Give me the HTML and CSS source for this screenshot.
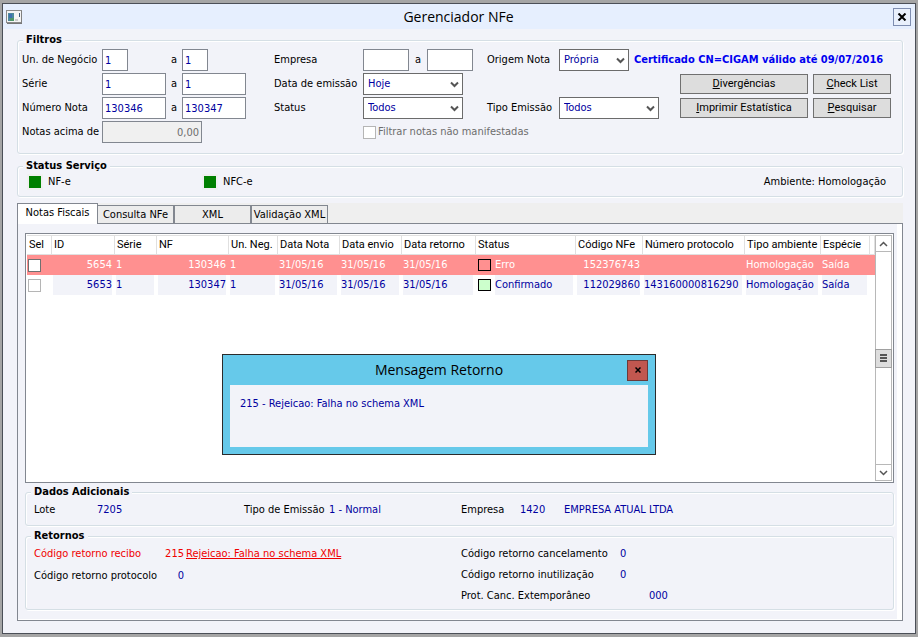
FILE: index.html
```html
<!DOCTYPE html>
<html lang="pt-BR">
<head>
  <meta charset="UTF-8">
  <meta name="viewport" content="width=device-width, initial-scale=1.0">
  <title>Gerenciador NFe</title>
  <link rel="stylesheet" href="styles.css">
</head>
<body>

  <div class="window">
    <header class="titlebar">
      <svg class="app-icon" width="16" height="14" viewBox="0 0 16 14">
        <rect x="0.5" y="0.5" width="15" height="12" fill="#f4f4f4" stroke="#8a8a8a"/>
        <path d="M1 13.5h15V1" fill="none" stroke="#777"/>
        <rect x="2" y="3" width="6" height="8" fill="#4d8a9c"/>
        <rect x="3" y="4" width="3" height="4" fill="#3e70b0"/>
        <rect x="4" y="8" width="4" height="3" fill="#4f9668"/>
        <rect x="9" y="9" width="3" height="2" fill="#ccc"/>
        <rect x="13" y="3" width="1" height="4" fill="#3c5a78"/>
      </svg>
      <h1>Gerenciador NFe</h1>
      <button class="close" aria-label="Fechar">
        <svg width="10" height="8" viewBox="0 0 10 8"><path d="M1.500 .5l7 7M8.500 .5l-7 7" stroke="#000" stroke-width="2"/></svg>
      </button>
    </header>

    <main>
      <fieldset class="filters">
        <legend>Filtros</legend>
        <div class="filter-cols">
          <div class="col-range">
            <label for="unIni">Un. de Negócio</label>
            <input id="unIni" class="short" type="text" value="1">
            <label for="unFim" class="to">a</label>
            <input id="unFim" class="short" type="text" value="1">

            <label for="serieIni">Série</label>
            <input id="serieIni" type="text" value="1">
            <label for="serieFim" class="to">a</label>
            <input id="serieFim" type="text" value="1">

            <label for="notaIni">Número Nota</label>
            <input id="notaIni" type="text" value="130346">
            <label for="notaFim" class="to">a</label>
            <input id="notaFim" type="text" value="130347">

            <label for="acima">Notas acima de</label>
            <input id="acima" class="amount" type="text" value="0,00" disabled>
          </div>

          <div class="col-company">
            <label for="empIni">Empresa</label>
            <input id="empIni" type="text">
            <label for="empFim" class="to">a</label>
            <input id="empFim" type="text">

            <label for="data">Data de emissão</label>
            <div class="select wide">
              <select id="data"><option>Hoje</option></select>
              <svg width="9" height="7" viewBox="0 0 9 7"><path d="M1 1.500l3.500 3.500L8 1.500" fill="none" stroke="#555" stroke-width="2"/></svg>
            </div>

            <label for="status">Status</label>
            <div class="select wide">
              <select id="status"><option>Todos</option></select>
              <svg width="9" height="7" viewBox="0 0 9 7"><path d="M1 1.500l3.500 3.500L8 1.500" fill="none" stroke="#555" stroke-width="2"/></svg>
            </div>

            <label class="check"><input type="checkbox" disabled>Filtrar notas não manifestadas</label>
          </div>

          <div class="col-origin">
            <div class="row">
              <label for="origem">Origem Nota</label>
              <div class="select narrow">
                <select id="origem"><option>Própria</option></select>
                <svg width="9" height="7" viewBox="0 0 9 7"><path d="M1 1.500l3.500 3.500L8 1.500" fill="none" stroke="#555" stroke-width="2"/></svg>
              </div>
              <strong class="cert">Certificado CN=CIGAM válido até 09/07/2016</strong>
            </div>
            <div class="row">
              <div class="actions">
                <button class="btn btn-wide"><u>D</u>ivergências</button>
                <button class="btn"><u>C</u>heck List</button>
              </div>
            </div>
            <div class="row">
              <label for="tipo">Tipo Emissão</label>
              <div class="select wide">
                <select id="tipo"><option>Todos</option></select>
                <svg width="9" height="7" viewBox="0 0 9 7"><path d="M1 1.500l3.500 3.500L8 1.500" fill="none" stroke="#555" stroke-width="2"/></svg>
              </div>
              <div class="actions">
                <button class="btn btn-wide"><u>I</u>mprimir Estatística</button>
                <button class="btn"><u>P</u>esquisar</button>
              </div>
            </div>
          </div>
        </div>
      </fieldset>

      <fieldset class="service">
        <legend>Status Serviço</legend>
        <div class="service-row">
          <span class="led-item"><i class="led"></i>NF-e</span>
          <span class="led-item"><i class="led"></i>NFC-e</span>
          <span class="env">Ambiente: Homologação</span>
        </div>
      </fieldset>

      <nav class="tabs">
        <button class="tab active">Notas Fiscais</button>
        <button class="tab">Consulta NFe</button>
        <button class="tab">XML</button>
        <button class="tab">Validação XML</button>
      </nav>

      <section class="panel">
        <div class="grid-box">
          <div class="table-area">
            <table>
              <colgroup>
                <col class="w-sel"><col class="w-id"><col class="w-serie"><col class="w-nf"><col class="w-un">
                <col class="w-date"><col class="w-date"><col class="w-ret"><col class="w-status"><col class="w-cod">
                <col class="w-prot"><col class="w-amb"><col class="w-esp"><col>
              </colgroup>
              <thead>
                <tr>
                  <th>Sel</th><th>ID</th><th>Série</th><th>NF</th><th>Un. Neg.</th><th>Data Nota</th><th>Data envio</th>
                  <th>Data retorno</th><th>Status</th><th>Código NFe</th><th>Número protocolo</th><th>Tipo ambiente</th><th>Espécie</th><th></th>
                </tr>
              </thead>
              <tbody>
                <tr class="error">
                  <td class="sel"><input type="checkbox" aria-label="Selecionar 5654"></td>
                  <td class="num">5654</td><td>1</td><td class="num">130346</td><td>1</td>
                  <td>31/05/16</td><td>31/05/16</td><td>31/05/16</td>
                  <td class="state"><div><i class="swatch"></i><span>Erro</span></div></td>
                  <td class="num">152376743</td><td></td><td>Homologação</td><td>Saída</td><td class="rest"></td>
                </tr>
                <tr>
                  <td class="sel"><input type="checkbox" aria-label="Selecionar 5653"></td>
                  <td class="num">5653</td><td>1</td><td class="num">130347</td><td>1</td>
                  <td>31/05/16</td><td>31/05/16</td><td>31/05/16</td>
                  <td class="state"><div><i class="swatch ok"></i><span>Confirmado</span></div></td>
                  <td class="num">112029860</td><td>143160000816290</td><td>Homologação</td><td>Saída</td><td class="rest"></td>
                </tr>
              </tbody>
            </table>
          </div>

          <div class="scrollbar">
            <button aria-label="Subir"><svg width="9" height="6" viewBox="0 0 9 6"><path d="M1 5l3.500-3.500L8 5" fill="none" stroke="#555" stroke-width="1.500"/></svg></button>
            <div class="thumb"><svg width="7" height="8" viewBox="0 0 7 8"><path d="M0 1h7M0 4h7M0 7h7" stroke="#555" stroke-width="2"/></svg></div>
            <button aria-label="Descer"><svg width="9" height="6" viewBox="0 0 9 6"><path d="M1 1l3.500 3.500L8 1" fill="none" stroke="#555" stroke-width="1.500"/></svg></button>
          </div>

          <div class="dialog" role="dialog" aria-labelledby="dialogTitle">
            <div class="dialog-head">
              <h2 id="dialogTitle">Mensagem Retorno</h2>
              <button class="dialog-close" aria-label="Fechar mensagem">
                <svg width="6" height="6" viewBox="0 0 6 6"><path d="M.5 .5l5 5M5.500 .5l-5 5" stroke="#000" stroke-width="1.500"/></svg>
              </button>
            </div>
            <p>215 - Rejeicao: Falha no schema XML</p>
          </div>
        </div>

        <fieldset class="extra">
          <legend>Dados Adicionais</legend>
          <div class="halves">
            <div class="info-left">
              <span>Lote</span><span class="value">7205</span>
              <span>Tipo de Emissão</span><span class="value">1 - Normal</span>
            </div>
            <div class="info-right">
              <span>Empresa</span><span class="value">1420</span><span class="value">EMPRESA ATUAL LTDA</span>
            </div>
          </div>
        </fieldset>

        <fieldset class="returns">
          <legend>Retornos</legend>
          <div class="halves">
            <div class="ret-left">
              <span class="alert">Código retorno recibo</span><span class="code alert">215</span><a href="#" class="alert">Rejeicao: Falha no schema XML</a>
              <span>Código retorno protocolo</span><span class="code value">0</span>
            </div>
            <div class="ret-right">
              <span>Código retorno cancelamento</span><span class="value">0</span>
              <span>Código retorno inutilização</span><span class="value">0</span>
              <span>Prot. Canc. Extemporâneo</span><span class="value long">000</span>
            </div>
          </div>
        </fieldset>
      </section>
    </main>
  </div>

</body>
</html>
```
FILE: styles.css
```css
* {
  box-sizing: border-box;
}
body {
  margin: 0;
  padding: 3px 2px;
  background-color: #a5a5a5;
  font-family: "DejaVu Sans Condensed", "Noto Sans", sans-serif;
  font-size: 11px;
  line-height: 14px;
  color: #000;
}
input, select, button {
  font: inherit;
  margin: 0;
}
button {
  padding: 0;
}
svg {
  display: block;
}

/* window frame */
.window {
  display: flex;
  flex-direction: column;
  min-height: calc(100vh - 6px);
  border: 1px solid #4b4f57;
  background-color: #f2f3f9;
}
.titlebar {
  display: grid;
  grid-template-columns: 18px 1fr 18px;
  align-items: center;
  height: 25px;
  padding: 0 4px 0 3px;
  background-color: #e6effe;
}
h1, h2 {
  margin: 0;
  font-family: "Open Sans", "Noto Sans", sans-serif;
  font-size: 14px;
  font-weight: normal;
  line-height: 20px;
  text-align: center;
}
.close {
  display: flex;
  align-items: center;
  justify-content: center;
  height: 18px;
  border: 1px solid #7e8db0;
  background-color: #e9f0fc;
}
main {
  flex: 1;
  display: flex;
  flex-direction: column;
  padding: 4px 12px 12px 14px;
}

/* etched group boxes */
fieldset {
  min-width: 0;
  margin: 0;
  padding: 0;
  border: 1px solid #d5dfe5;
  border-radius: 3px;
  box-shadow: inset 1px 1px #fff, 1px 1px #fff;
}
legend {
  margin-left: 5px;
  padding: 0 3px;
  background-color: #f2f3f9;
  font-weight: bold;
  line-height: 14px;
}

/* filters */
.filter-cols {
  display: flex;
  padding: 2px 11px 10px 4px;
  white-space: nowrap;
}
.col-range, .col-company {
  display: grid;
  grid-auto-rows: 22px;
  row-gap: 2px;
  align-items: center;
}
.col-range {
  grid-template-columns: 80px 64px 16px 64px;
  margin-right: 28px;
}
.col-company {
  grid-template-columns: 89px 46px 18px 46px;
  margin-right: 14px;
}
.col-origin {
  flex: 1;
  display: grid;
  grid-template-rows: repeat(3, 22px);
  align-content: start;
  row-gap: 2px;
}
.row {
  display: flex;
  align-items: center;
}
.row > label {
  width: 72px;
}
.to {
  text-align: center;
}
input[type="text"] {
  width: 100%;
  height: 22px;
  padding: 0 2px;
  border: 1px solid #828790;
  background-color: #fff;
  color: #0000a0;
}
input.short {
  width: 26px;
}
input.amount {
  grid-column: 2 / -1;
  width: 100px;
  background-color: #f0f0f0;
  color: #6d6d6d;
  text-align: right;
}
.select {
  position: relative;
  height: 22px;
}
.select select {
  appearance: none;
  width: 100%;
  height: 22px;
  padding: 0 16px 0 4px;
  border: 1px solid #6b6b6b;
  border-radius: 0;
  background-color: #fff;
  color: #0000a0;
}
.select svg {
  position: absolute;
  right: 4px;
  top: 8px;
  pointer-events: none;
}
.wide {
  width: 100px;
}
.narrow {
  width: 70px;
}
.col-company .select {
  grid-column: 2 / -1;
}
.check {
  grid-column: 2 / -1;
  display: flex;
  align-items: center;
  gap: 2px;
  width: 0;
  color: #6d6d6d;
}
input[type="checkbox"] {
  appearance: none;
  flex: none;
  width: 13px;
  height: 13px;
  border: 1px solid #b5b5b5;
  background-color: #fff;
}
.cert {
  margin-left: 5px;
  color: #0000f0;
}
.actions {
  display: flex;
  gap: 5px;
  margin-left: auto;
}
.btn {
  width: 78px;
  height: 20px;
  border: 1px solid #707070;
  background-color: #ddd;
  font-family: Roboto, "Liberation Sans", sans-serif;
}
.btn-wide {
  width: 128px;
}

/* service status */
.service {
  margin-top: 5px;
}
.service-row {
  display: flex;
  align-items: center;
  padding: 1px 16px 6px 9px;
}
.led-item {
  display: flex;
  align-items: center;
  gap: 5px;
  width: 175px;
}
.led {
  width: 16px;
  height: 16px;
  border: 2px solid #f0f0f0;
  background-color: green;
}
.env {
  margin-left: auto;
}

/* tabs */
.tabs {
  display: flex;
  align-items: flex-end;
  height: 20px;
  margin-top: 6px;
  background-color: #efefef;
}
.tab {
  width: 77px;
  height: 18px;
  border: 1px solid #828790;
  border-bottom: none;
  background-color: #ececec;
}
.tab.active {
  width: 81px;
  height: 21px;
  margin: 0 -1px -1px 0;
  padding-bottom: 2px;
  background-color: #fff;
  z-index: 1;
}
.panel {
  flex: 1;
  display: flex;
  flex-direction: column;
  padding: 9px 8px 10px 7px;
  border: 1px solid #828790;
  box-shadow: inset -5px -1px #fff;
}

/* invoice grid */
.grid-box {
  position: relative;
  flex: 1;
  display: flex;
  min-height: 249px;
  padding: 1px;
  border: 1px solid #828790;
  background-color: #fff;
}
.table-area {
  flex: 1;
  min-width: 0;
  overflow: hidden;
}
table {
  width: 100%;
  table-layout: fixed;
  border-collapse: separate;
  border-spacing: 0;
  color: #0000a0;
  white-space: nowrap;
}
.w-sel { width: 25px; }
.w-id { width: 63px; }
.w-serie { width: 42px; }
.w-nf { width: 72px; }
.w-un { width: 49px; }
.w-date { width: 62px; }
.w-ret { width: 74px; }
.w-status { width: 100px; }
.w-cod { width: 67px; }
.w-prot { width: 102px; }
.w-amb { width: 76px; }
.w-esp { width: 49px; }
th {
  height: 20px;
  padding: 0 0 0 2px;
  border: 1px solid #e0e0e0;
  border-left: none;
  font-family: Roboto, "Liberation Sans", sans-serif;
  font-weight: normal;
  color: #000;
  text-align: left;
}
td {
  height: 20px;
  padding: 0;
  border: solid transparent;
  border-width: 0 3px 0 1px;
  background-color: #f2f3f9;
  background-clip: padding-box;
}
.num {
  text-align: right;
}
.sel, .state, .rest, .error td {
  background-color: transparent;
}
.sel input {
  display: block;
}
.error {
  background-color: #ff9090;
  color: #fff;
}
.error input {
  border-color: #707070;
}
.state div {
  display: flex;
  align-items: center;
  gap: 4px;
  padding-left: 1px;
}
.state span {
  flex: 1;
  line-height: 20px;
  background-color: #f2f3f9;
}
.error .state span {
  background-color: transparent;
}
.swatch {
  width: 13px;
  height: 12px;
  border: 1px solid #000;
}
.swatch.ok {
  background-color: #ccffcc;
}
.scrollbar {
  display: flex;
  flex-direction: column;
  justify-content: space-between;
  width: 17px;
  border: 1px solid #b8b8b8;
}
.scrollbar button, .thumb {
  display: flex;
  align-items: center;
  justify-content: center;
  height: 16px;
  border: none;
  border-bottom: 1px solid #b8b8b8;
  background-color: #fff;
}
.scrollbar button:last-child {
  border-top: 1px solid #b8b8b8;
  border-bottom: none;
}
.thumb {
  height: 19px;
  margin: 0 -1px;
  border: 1px solid #a0a0a0;
  background-color: #ddd;
}

/* return message */
.dialog {
  position: absolute;
  top: 120px;
  left: 196px;
  width: 434px;
  padding: 0 7px 7px;
  border: 1px solid #2b2b2b;
  background-color: #66c9ea;
}
.dialog-head {
  display: grid;
  grid-template-columns: 1fr 21px;
  align-items: center;
  height: 30px;
}
.dialog-head h2 {
  padding-left: 21px;
}
.dialog-close {
  display: flex;
  align-items: center;
  justify-content: center;
  height: 21px;
  border: 1px solid #6b3a3a;
  background-color: #c1574f;
}
.dialog p {
  height: 62px;
  margin: 0;
  padding: 12px 10px;
  background-color: #f2f3f9;
  color: #0000a0;
}

/* bottom groups */
.extra {
  margin-top: 2px;
}
.returns {
  margin-top: 3px;
}
.halves {
  display: grid;
  grid-template-columns: 1fr 1fr;
  column-gap: 3px;
  padding: 3px 8px 7px;
  white-space: nowrap;
}
.returns .halves {
  padding-bottom: 5px;
}
.info-left, .info-right, .ret-left, .ret-right {
  display: grid;
  align-content: start;
  line-height: 16px;
}
.info-left {
  grid-template-columns: 63px 147px 85px 1fr;
}
.info-right {
  grid-template-columns: 59px 44px 1fr;
}
.ret-left {
  grid-template-columns: 128px 20px 1fr;
  column-gap: 2px;
  row-gap: 6px;
}
.ret-right {
  grid-template-columns: 159px 1fr;
  row-gap: 5px;
}
.value {
  color: #0000a0;
}
.code {
  text-align: right;
}
.alert {
  color: #f00000;
}
.long {
  padding-left: 29px;
}
```
